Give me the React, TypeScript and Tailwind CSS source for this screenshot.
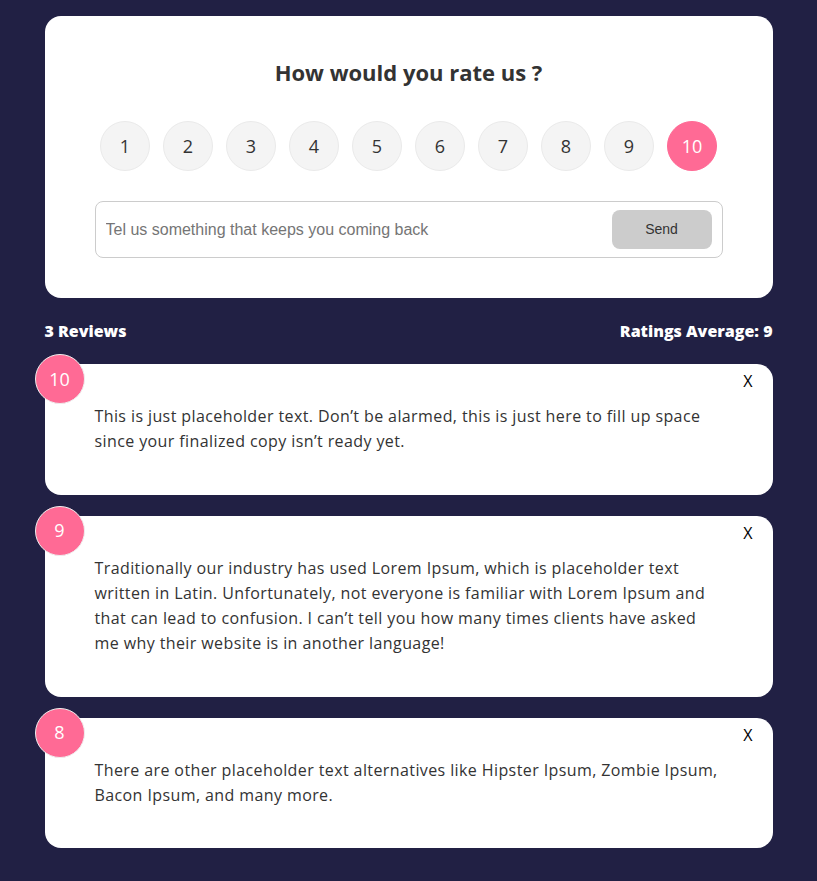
import { useState } from "react";

const reviews = [
  {
    id: 1,
    rating: 10,
    text: "This is just placeholder text. Don\u2019t be alarmed, this is just here to fill up space since your finalized copy isn\u2019t ready yet.",
  },
  {
    id: 2,
    rating: 9,
    text: "Traditionally our industry has used Lorem Ipsum, which is placeholder text written in Latin. Unfortunately, not everyone is familiar with Lorem Ipsum and that can lead to confusion. I can\u2019t tell you how many times clients have asked me why their website is in another language!",
  },
  {
    id: 3,
    rating: 8,
    text: "There are other placeholder text alternatives like Hipster Ipsum, Zombie Ipsum, Bacon Ipsum, and many more.",
  },
];

export default function App() {
  const [selected, setSelected] = useState(10);
  const [items, setItems] = useState(reviews);

  const average = items.length
    ? Math.round(items.reduce((s, r) => s + r.rating, 0) / items.length)
    : 0;

  return (
    <div
      className="min-h-[881px] bg-[#212044] pt-4 pb-8"
      style={{ fontFamily: '"Open Sans", sans-serif' }}
    >
      <div className="mx-auto w-[728px]">
        <div className="rounded-2xl bg-white px-[50px] pt-10 pb-10">
          <h2 className="text-center text-[22px] leading-[33px] font-bold text-[#333]">
            How would you rate us ?
          </h2>
          <ul className="mt-8 flex justify-center gap-[13px]">
            {Array.from({ length: 10 }, (_, i) => i + 1).map((n) => (
              <li key={n}>
                <button
                  onClick={() => setSelected(n)}
                  className={
                    n === selected
                      ? "flex h-[50px] w-[50px] items-center justify-center rounded-full border border-[#ff6a95] bg-[#ff6a95] text-[18px] text-white"
                      : "flex h-[50px] w-[50px] items-center justify-center rounded-full border border-[#eaeaea] bg-[#f4f4f4] text-[18px] text-[#333]"
                  }
                >
                  {n}
                </button>
              </li>
            ))}
          </ul>
          <form
            onSubmit={(e) => e.preventDefault()}
            className="mt-[30px] flex h-[57px] items-center rounded-lg border border-[#ccc] pr-[10px] pl-[10px]"
          >
            <input
              type="text"
              placeholder="Tel us something that keeps you coming back"
              className="flex-1 text-[16px] text-[#333] outline-none placeholder:text-[#757575]"
              style={{ fontFamily: '"Liberation Sans", Arial, sans-serif' }}
            />
            <button
              type="submit"
              className="h-[39px] w-[100px] rounded-lg bg-[#ccc] text-[14px] text-[#333]"
              style={{ fontFamily: '"Liberation Sans", Arial, sans-serif' }}
            >
              Send
            </button>
          </form>
        </div>

        <div className="mt-[21px] mb-[21px] flex items-center justify-between text-[16px] leading-6 font-extrabold text-white">
          <span>{items.length} Reviews</span>
          <span>Ratings Average: {average}</span>
        </div>

        <div className="flex flex-col gap-[21px]">
          {items.map((r) => (
            <div
              key={r.id}
              className="relative rounded-2xl bg-white px-[50px] py-10"
            >
              <div className="absolute -top-[10px] -left-[10px] flex h-[50px] w-[50px] items-center justify-center rounded-full border border-[#eee] bg-[#ff6a95] text-[18px] text-white">
                {r.rating}
              </div>
              <button
                onClick={() => setItems(items.filter((x) => x.id !== r.id))}
                className="absolute top-[5px] right-[20px] text-[16px] leading-6 text-black"
              >
                X
              </button>
              <p className="text-[16px] leading-[25.3px] tracking-[0.4px] text-[#333]">
                {r.text}
              </p>
            </div>
          ))}
        </div>
      </div>
    </div>
  );
}
